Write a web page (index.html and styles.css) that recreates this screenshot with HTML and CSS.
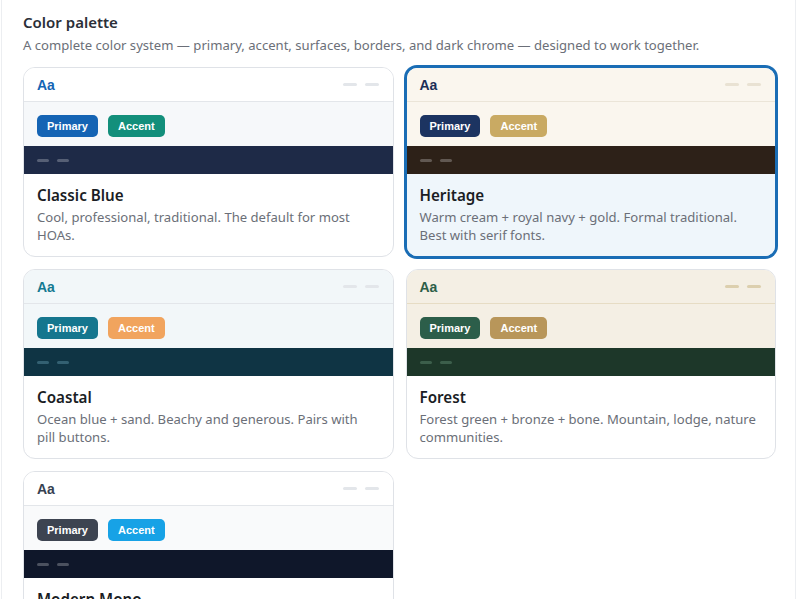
FILE: index.html
```html
<!DOCTYPE html>
<html lang="en">
<head>
<meta charset="utf-8">
<title>Color palette</title>
<link rel="stylesheet" href="styles.css">
</head>
<body>
<div class="page">
  <h2 class="title">Color palette</h2>
  <p class="subtitle">A complete color system — primary, accent, surfaces, borders, and dark chrome — designed to work together.</p>
  <div class="grid">
    <div class="card classic">
      <div class="head"><span class="aa">Aa</span><span class="dashes"><i></i><i></i></span></div>
      <div class="chips"><span class="chip primary">Primary</span><span class="chip accent">Accent</span></div>
      <div class="chrome"><i></i><i></i></div>
      <div class="body"><h3>Classic Blue</h3><p>Cool, professional, traditional. The default for most HOAs.</p></div>
    </div>
    <div class="card heritage selected">
      <div class="head"><span class="aa">Aa</span><span class="dashes"><i></i><i></i></span></div>
      <div class="chips"><span class="chip primary">Primary</span><span class="chip accent">Accent</span></div>
      <div class="chrome"><i></i><i></i></div>
      <div class="body"><h3>Heritage</h3><p>Warm cream + royal navy + gold. Formal traditional. Best with serif fonts.</p></div>
    </div>
    <div class="card coastal">
      <div class="head"><span class="aa">Aa</span><span class="dashes"><i></i><i></i></span></div>
      <div class="chips"><span class="chip primary">Primary</span><span class="chip accent">Accent</span></div>
      <div class="chrome"><i></i><i></i></div>
      <div class="body"><h3>Coastal</h3><p>Ocean blue + sand. Beachy and generous. Pairs with pill buttons.</p></div>
    </div>
    <div class="card forest">
      <div class="head"><span class="aa">Aa</span><span class="dashes"><i></i><i></i></span></div>
      <div class="chips"><span class="chip primary">Primary</span><span class="chip accent">Accent</span></div>
      <div class="chrome"><i></i><i></i></div>
      <div class="body"><h3>Forest</h3><p>Forest green + bronze + bone. Mountain, lodge, nature communities.</p></div>
    </div>
    <div class="card mono">
      <div class="head"><span class="aa">Aa</span><span class="dashes"><i></i><i></i></span></div>
      <div class="chips"><span class="chip primary">Primary</span><span class="chip accent">Accent</span></div>
      <div class="chrome"><i></i><i></i></div>
      <div class="body"><h3>Modern Mono</h3><p>Slate + sky. Clean, contemporary, minimal chrome.</p></div>
    </div>
  </div>
</div>
</body>
</html>
```
FILE: styles.css
```css
html, body {
  margin: 0;
  padding: 0;
  background: #ffffff;
  height: 100%;
  overflow: hidden;
}
body {
  font-family: "Noto Sans", "Open Sans", sans-serif;
  color: #1f2430;
}
.page {
  margin: 0 4px 0 1px;
  min-height: 100%;
  border-left: 1px solid #eceef1;
  border-right: 1px solid #eceef1;
  padding: 12px 19px 0 21px;
  box-sizing: border-box;
}
.title {
  margin: 0;
  font-size: 15px;
  font-weight: 600;
  line-height: 21px;
  color: #2b2f38;
}
.subtitle {
  margin: 3px 0 0;
  font-size: 13.1px;
  line-height: 18px;
  color: #6b6f78;
}
.grid {
  margin-top: 13px;
  display: grid;
  grid-template-columns: 1fr 1fr;
  column-gap: 12px;
  row-gap: 12px;
  align-items: start;
}
.card {
  border: 1px solid #dfe2e7;
  border-radius: 12px;
  overflow: hidden;
  background: #fff;
}
.card.selected {
  border: 2px solid #1a6db5;
  margin: -1px;
  box-shadow: 0 0 0 1px #1a6db5;
}
.head {
  height: 33px;
  display: flex;
  align-items: center;
  justify-content: space-between;
  padding: 0 14px 0 13px;
  border-bottom: 1px solid #e3e6ea;
}
.aa {
  font-family: "Liberation Sans", Arial, sans-serif;
  font-weight: 700;
  font-size: 14px;
  padding-top: 1px;
}
.dashes {
  display: flex;
  gap: 8px;
}
.dashes i {
  display: block;
  width: 14px;
  height: 3px;
  border-radius: 2px;
  background: #e3e6ea;
}
.chips {
  height: 44px;
  box-sizing: border-box;
  display: flex;
  align-items: center;
  gap: 10px;
  padding: 3px 13px 0;
}
.chip {
  font-family: "Liberation Sans", Arial, sans-serif;
  font-weight: 700;
  font-size: 11px;
  color: #fff;
  height: 22px;
  line-height: 22px;
  padding: 0 10px;
  border-radius: 5px;
}
.chrome {
  height: 28px;
  display: flex;
  align-items: center;
  gap: 8px;
  padding: 0 13px;
}
.chrome i {
  display: block;
  width: 12px;
  height: 3px;
  border-radius: 2px;
  background: rgba(255, 255, 255, 0.25);
}
.body {
  padding: 11px 16px 12px 13px;
}
.body h3 {
  margin: 0;
  font-size: 15.2px;
  font-weight: 600;
  line-height: 21px;
  color: #1a1d24;
}
.body p {
  margin: 2px 0 0;
  font-size: 13.1px;
  line-height: 18px;
  color: #6b6f78;
}

/* Classic Blue */
.classic .head { background: #ffffff; }
.classic .aa { color: #1464b4; }
.classic .chips { background: #f6f8fa; }
.classic .primary { background: #1564b4; }
.classic .accent { background: #138f7b; }
.classic .chrome { background: #1e2a47; }

/* Heritage */
.heritage .head { background: #faf6ee; border-bottom-color: #ebe5d8; }
.heritage .aa { color: #1b2e57; }
.heritage .chips { background: #faf6ee; }
.heritage .primary { background: #1c3461; }
.heritage .accent { background: #c9aa63; }
.heritage .chrome { background: #2d2118; }
.heritage .dashes i { background: #e9e2d3; }
.heritage .body { background: #eff6fb; }

/* Coastal */
.coastal .head { background: #f2f7f9; }
.coastal .aa { color: #157a92; }
.coastal .chips { background: #f2f7f9; }
.coastal .primary { background: #15768e; }
.coastal .accent { background: #f1a45e; }
.coastal .chrome { background: #0f3444; }
.coastal .chrome i { background: rgba(120, 180, 200, 0.35); }

/* Forest */
.forest .head { background: #f4efe4; border-bottom-color: #e6dcc4; }
.forest .aa { color: #2d5e48; }
.forest .chips { background: #f4efe4; }
.forest .primary { background: #2c5e4a; }
.forest .accent { background: #b8965a; }
.forest .chrome { background: #1d3729; }
.forest .chrome i { background: rgba(120, 170, 140, 0.35); }
.forest .dashes i { background: #dccfae; }

/* Modern Mono */
.mono .head { background: #ffffff; }
.mono .aa { color: #374151; }
.mono .chips { background: #f9fafb; }
.mono .primary { background: #3d4451; }
.mono .accent { background: #17a2e6; }
.mono .chrome { background: #0f172a; }
```
